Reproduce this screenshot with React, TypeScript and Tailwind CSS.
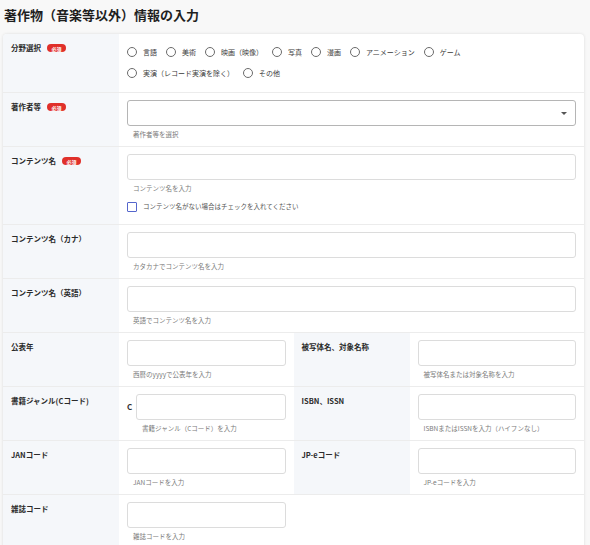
import React from "react";

// ---------------------------------------
// SMALL PARTS
// ---------------------------------------
function Required() {
    return (
        <span className="ml-[6px] inline-flex h-[8px] w-[19px] items-center justify-center rounded-full bg-[#e0302a] align-middle text-[5px] font-bold leading-none text-white">
            必須
        </span>
    );
}

function LabelCell({children, required = false}: { children: React.ReactNode; required?: boolean }) {
    return (
        <div className="border-b border-[#ececec] bg-[#f5f7fa] px-[8px] pt-[10px]">
            <div className="flex items-center text-[7.5px] font-bold leading-[8px] text-[#2b2b2b]">
                <span>{children}</span>
                {required && <Required/>}
            </div>
        </div>
    );
}

function Help({children, className = ""}: { children: React.ReactNode; className?: string }) {
    return (
        <div className={`mt-[4px] pl-[6px] text-[6.5px] leading-[8px] text-[#7a7a7a] ${className}`}>
            {children}
        </div>
    );
}

function TextBox() {
    return <div className="h-[26px] w-full rounded-[3px] border border-[#dcdcdc] bg-white"/>;
}

function FieldCell({help, span = false, children}: { help?: string; span?: boolean; children?: React.ReactNode }) {
    return (
        <div className={`border-b border-[#ececec] px-[8px] pt-[7px] pb-[8px] ${span ? "col-span-3" : ""}`}>
            {children ?? <TextBox/>}
            {help && <Help>{help}</Help>}
        </div>
    );
}

const genres = ["言語", "美術", "映画（映像）", "写真", "漫画", "アニメーション", "ゲーム", "実演（レコード実演を除く）", "その他"];

// ---------------------------------------
// PAGE
// ---------------------------------------
export default function App() {
    return (
        <div className="min-h-screen bg-[#f8f8f8] px-[3px] pt-[5px] font-['Noto_Sans_CJK_JP','Noto_Sans',sans-serif]">
            <h1 className="ml-[1px] text-[13px] font-bold leading-[20px] text-[#1f1f1f]">
                著作物（音楽等以外）情報の入力
            </h1>

            <div className="mt-[9px] grid w-[581px] grid-cols-[116px_1fr_116px_1fr] overflow-hidden rounded-t-[4px] bg-white shadow-[0_0_3px_rgba(0,0,0,0.12)]">

                {/* 分野選択 */}
                <LabelCell required>分野選択</LabelCell>
                <div className="col-span-3 border-b border-[#ececec] px-[8px] pt-[7px] pb-[8px]">
                    <div className="flex flex-wrap gap-x-[9px]">
                        {genres.map((g) => (
                            <label key={g} className="flex h-[21.5px] items-center text-[7px] text-[#3a3a3a]">
                                <span className="h-[10px] w-[10px] rounded-full border border-[#6b6b6b] bg-white"/>
                                <span className="ml-[6px]">{g}</span>
                            </label>
                        ))}
                    </div>
                </div>

                {/* 著作者等 */}
                <LabelCell required>著作者等</LabelCell>
                <FieldCell span help="著作者等を選択">
                    <div className="flex h-[26px] w-full items-center justify-end rounded-[3px] border border-[#b5b5b5] bg-white pr-[8px]">
                        <span className="h-0 w-0 border-x-[3px] border-t-[3.5px] border-x-transparent border-t-[#555]"/>
                    </div>
                </FieldCell>

                {/* コンテンツ名 */}
                <LabelCell required>コンテンツ名</LabelCell>
                <div className="col-span-3 border-b border-[#ececec] px-[8px] pt-[7px] pb-[10px]">
                    <TextBox/>
                    <Help>コンテンツ名を入力</Help>
                    <label className="mt-[8px] flex h-[14px] items-center text-[6.5px] text-[#555]">
                        <span className="h-[10px] w-[10px] rounded-[1px] border border-[#5566cc] bg-white"/>
                        <span className="ml-[6px]">コンテンツ名がない場合はチェックを入れてください</span>
                    </label>
                </div>

                {/* カナ */}
                <LabelCell>コンテンツ名（カナ）</LabelCell>
                <FieldCell span help="カタカナでコンテンツ名を入力"/>

                {/* 英語 */}
                <LabelCell>コンテンツ名（英語）</LabelCell>
                <FieldCell span help="英語でコンテンツ名を入力"/>

                {/* 公表年 / 被写体名 */}
                <LabelCell>公表年</LabelCell>
                <FieldCell help="西暦のyyyyで公表年を入力"/>
                <LabelCell>被写体名、対象名称</LabelCell>
                <FieldCell help="被写体名または対象名称を入力"/>

                {/* 書籍ジャンル / ISBN */}
                <LabelCell>書籍ジャンル(Cコード)</LabelCell>
                <FieldCell>
                    <div className="flex items-center">
                        <span className="w-[9px] text-[8px] font-bold text-[#333]">C</span>
                        <TextBox/>
                    </div>
                    <Help className="ml-[9px]">書籍ジャンル（Cコード）を入力</Help>
                </FieldCell>
                <LabelCell>ISBN、ISSN</LabelCell>
                <FieldCell help="ISBNまたはISSNを入力（ハイフンなし）"/>

                {/* JAN / JP-e */}
                <LabelCell>JANコード</LabelCell>
                <FieldCell help="JANコードを入力"/>
                <LabelCell>JP-eコード</LabelCell>
                <FieldCell help="JP-eコードを入力"/>

                {/* 雑誌コード */}
                <LabelCell>雑誌コード</LabelCell>
                <FieldCell help="雑誌コードを入力"/>
                <div className="col-span-2 border-b border-[#ececec]"/>
            </div>
        </div>
    );
}
